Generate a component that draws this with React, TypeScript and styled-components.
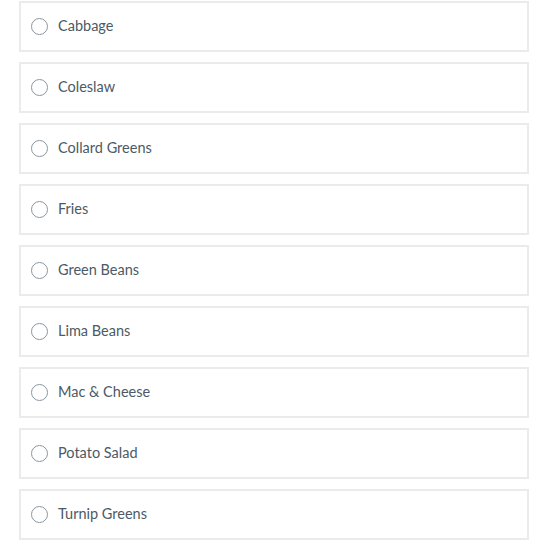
import React, { useState } from "react";
import styled, { createGlobalStyle } from "styled-components";

const GlobalStyle = createGlobalStyle`
  body {
    margin: 0;
    background: #ffffff;
    font-family: Lato, "Open Sans", sans-serif;
  }
`;

const List = styled.div`
  display: flex;
  flex-direction: column;
  gap: 10px;
  width: 510px;
  padding: 1px 0 0 19px;
`;

const Option = styled.label`
  box-sizing: border-box;
  display: flex;
  align-items: center;
  height: 51px;
  padding: 0 0 2px 10px;
  border: 2px solid #ebebeb;
  background: #ffffff;
  cursor: pointer;
`;

const Circle = styled.span<{ $checked: boolean }>`
  box-sizing: border-box;
  width: 17px;
  height: 17px;
  margin-top: 1px;
  border-radius: 50%;
  border: 1px solid ${(p) => (p.$checked ? "#2d3b45" : "#8b969e")};
  background: ${(p) => (p.$checked ? "radial-gradient(circle, #2d3b45 40%, #fff 45%)" : "#fff")};
  flex-shrink: 0;
`;

const Label = styled.span`
  margin-left: 10px;
  font-size: 14.5px;
  line-height: 18px;
  color: #4b5a66;
`;

const sides = [
  "Cabbage",
  "Coleslaw",
  "Collard Greens",
  "Fries",
  "Green Beans",
  "Lima Beans",
  "Mac & Cheese",
  "Potato Salad",
  "Turnip Greens",
];

const App = () => {
  const [picked, setPicked] = useState("");
  return (
    <>
      <GlobalStyle />
      <List>
        {sides.map((s) => (
          <Option key={s} onClick={() => setPicked(s)}>
            <Circle $checked={picked === s} />
            <Label>{s}</Label>
          </Option>
        ))}
      </List>
    </>
  );
};

export default App;
